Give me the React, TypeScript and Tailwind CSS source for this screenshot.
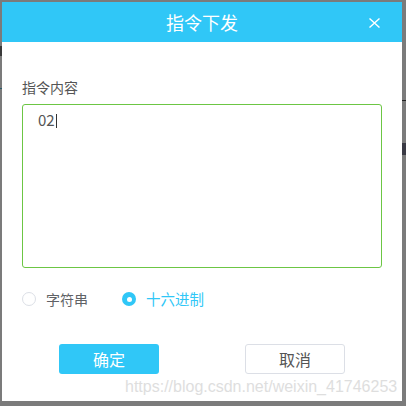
export default function App() {
  return (
    <div className="relative h-[406px] w-[406px] overflow-hidden bg-[#7b7b7b] font-['Noto_Sans_CJK_SC',sans-serif]">
      {/* bits of the page behind the modal */}
      <div className="absolute left-0 top-[46px] h-[10px] w-[2px] bg-[#3a3a3a]" />
      <div className="absolute left-0 top-[88px] h-px w-[2px] bg-[#2a5a6a]" />
      <div className="absolute right-0 top-[100px] h-px w-[5px] bg-[#222]" />
      <div className="absolute right-0 top-[143px] h-[12px] w-[4px] bg-[#3a3a44]" />

      <div className="absolute left-[2px] top-[2px] flex h-[399px] w-[400px] flex-col bg-white">
        <div className="relative flex h-[40px] shrink-0 items-center justify-center bg-[#30c7f7]">
          <span className="text-[18px] leading-none text-white">指令下发</span>
          <svg className="absolute left-[367px] top-[16px] h-[10px] w-[11px]" viewBox="0 0 11 10" fill="none">
            <path d="M0.5 0.5L10.5 9.5M10.5 0.5L0.5 9.5" stroke="white" strokeWidth="1.4" />
          </svg>
        </div>

        <div className="flex flex-col px-[20px]">
          <p className="mt-[35px] text-[14px] leading-[20px] text-[#555]">指令内容</p>
          <div className="mt-[7px] h-[164px] w-[360px] rounded-[3px] border border-[#6cc644] px-[15px] pt-[2px]">
            <span className="text-[15px] leading-[20px] text-[#555]">02</span>
            <span className="ml-px inline-block h-[14px] w-px translate-y-[2px] bg-[#333]" />
          </div>

          <div className="mt-[21px] flex h-[20px] items-center">
            <span className="h-[14px] w-[14px] rounded-full border border-[#dcdfe6] bg-white" />
            <span className="ml-[10px] text-[14px] leading-[20px] text-[#606266]">字符串</span>
            <span className="ml-[34px] flex h-[14px] w-[14px] items-center justify-center rounded-full bg-[#30c7f7]">
              <span className="h-[5px] w-[5px] rounded-full bg-white" />
            </span>
            <span className="ml-[10px] text-[14.5px] leading-[20px] text-[#30c7f7]">十六进制</span>
          </div>
        </div>

        <div className="mt-[35px] flex justify-center gap-[86px]">
          <button className="flex h-[30px] w-[100px] items-center justify-center rounded-[3px] bg-[#30c7f7] text-[16px] text-white">
            确定
          </button>
          <button className="flex h-[30px] w-[100px] items-center justify-center rounded-[3px] border border-[#dcdfe6] bg-white text-[16px] text-[#555]">
            取消
          </button>
        </div>

        <span className="absolute left-[123px] top-[375px] font-['Liberation_Sans',Arial,sans-serif] text-[16px] leading-[20px] text-[#dedede]">
          https://blog.csdn.net/weixin_41746253
        </span>
      </div>
    </div>
  );
}
